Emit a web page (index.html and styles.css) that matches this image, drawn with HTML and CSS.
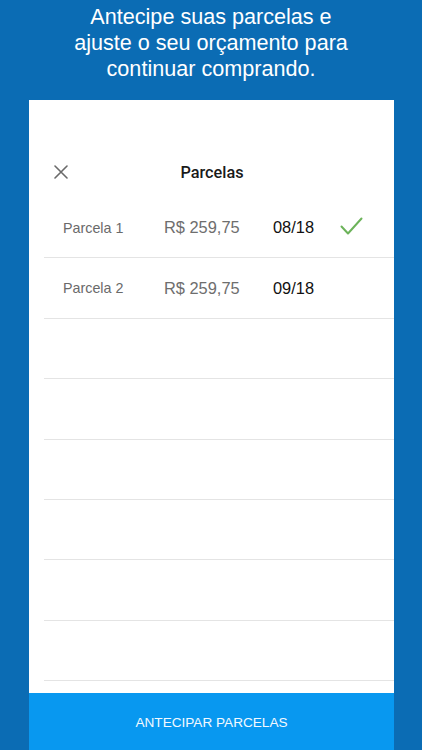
FILE: index.html
```html
<!DOCTYPE html>
<html lang="pt-BR">
<head>
<meta charset="utf-8">
<title>Parcelas</title>
<link rel="stylesheet" href="styles.css">
</head>
<body>
<div class="screen">
  <h1 class="headline">Antecipe suas parcelas e<br>ajuste o seu orçamento para<br>continuar comprando.</h1>
  <div class="card">
    <div class="card-header">
      <svg class="close" width="14" height="14" viewBox="0 0 14 14"><path d="M1 1 L13 13 M13 1 L1 13" stroke="#6a6a6a" stroke-width="1.6" fill="none" stroke-linecap="round"/></svg>
      <div class="title">Parcelas</div>
    </div>
    <div class="list">
      <div class="row">
        <span class="label">Parcela 1</span>
        <span class="value">R$ 259,75</span>
        <span class="date">08/18</span>
        <svg class="check" width="23" height="19" viewBox="0 0 23 19"><path d="M1.5 9.5 L8 16.5 L21.5 1.5" stroke="#6cb35a" stroke-width="2" fill="none" stroke-linecap="round" stroke-linejoin="round"/></svg>
      </div>
      <div class="row">
        <span class="label">Parcela 2</span>
        <span class="value">R$ 259,75</span>
        <span class="date">09/18</span>
      </div>
      <div class="row"></div>
      <div class="row"></div>
      <div class="row"></div>
      <div class="row"></div>
      <div class="row"></div>
      <div class="row"></div>
    </div>
    <div class="action">ANTECIPAR PARCELAS</div>
  </div>
</div>
</body>
</html>
```

FILE: styles.css
```css
html, body {
  margin: 0;
  padding: 0;
}
body {
  background: #0b6cb4;
  font-family: "Liberation Sans", Arial, sans-serif;
}
.screen {
  width: 422px;
  height: 750px;
  display: flex;
  flex-direction: column;
  overflow: hidden;
}
.headline {
  flex: none;
  margin: 0;
  padding-top: 3.5px;
  height: 100px;
  box-sizing: border-box;
  font-size: 21.6px;
  line-height: 26px;
  font-weight: normal;
  color: #ffffff;
  text-align: center;
}
.card {
  flex: none;
  margin-left: 29px;
  width: 365px;
  height: 650px;
  background: #ffffff;
  display: flex;
  flex-direction: column;
}
.card-header {
  flex: none;
  margin-top: 46px;
  height: 52px;
  position: relative;
  display: flex;
  align-items: center;
  justify-content: center;
}
.close {
  position: absolute;
  left: 25px;
  top: 19px;
}
.title {
  font-family: Roboto, "Liberation Sans", sans-serif;
  font-weight: 500;
  font-size: 16.3px;
  color: #1a1a1a;
  margin-left: 1px;
}
.list {
  flex: 1;
  margin-left: 15px;
}
.row {
  height: 59.4px;
  border-bottom: 1px solid #e4e4e4;
  display: grid;
  grid-template-columns: 101px 109px 68px auto;
  align-items: center;
  padding-left: 19px;
}
.label {
  font-size: 14.3px;
  color: #6a6a6a;
}
.value {
  font-size: 16.4px;
  color: #6e6e6e;
}
.date {
  font-size: 16.4px;
  color: #111111;
}
.check {
  margin-top: -2px;
  margin-left: -1px;
}
.action {
  flex: none;
  height: 57px;
  background: #0898f0;
  color: #f2f9ff;
  font-size: 13.6px;
  display: flex;
  align-items: center;
  justify-content: center;
  padding-top: 1px;
  box-sizing: border-box;
}
```
